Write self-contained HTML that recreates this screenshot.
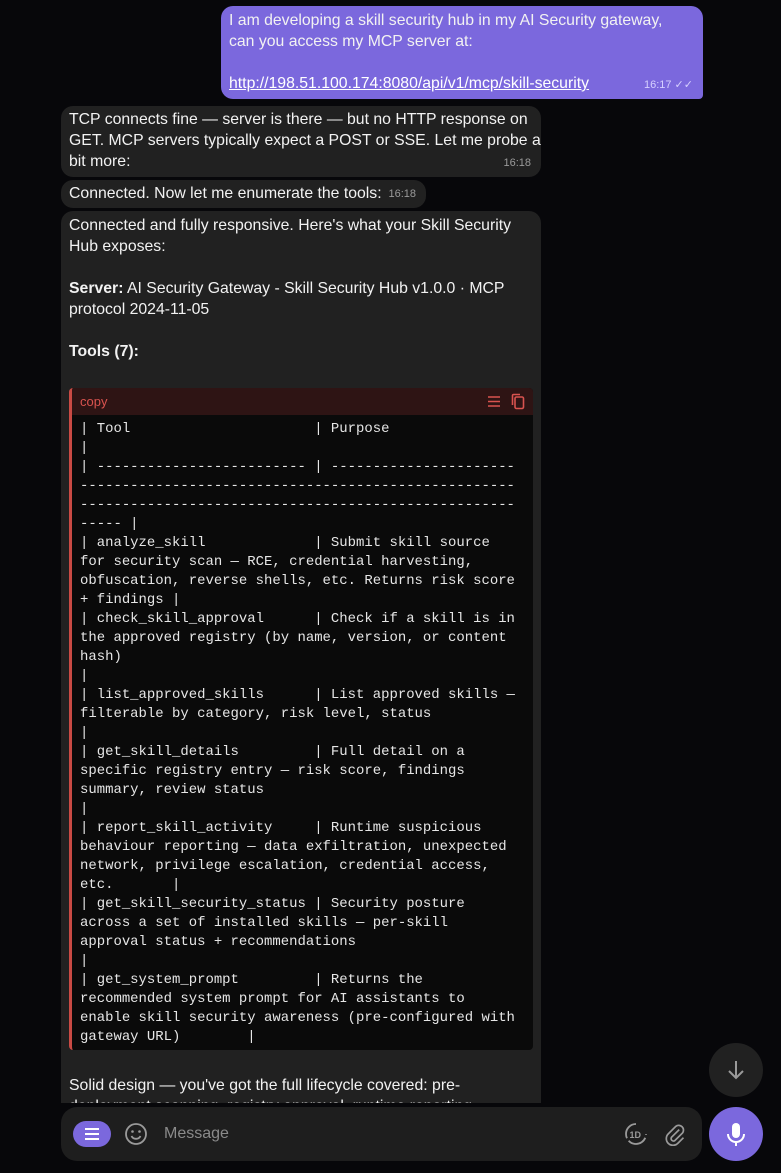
<!DOCTYPE html>
<html><head><meta charset="utf-8"><style>
*{box-sizing:border-box;margin:0;padding:0}
body{width:781px;height:1173px;background:#07070a;overflow:hidden;position:relative;font-family:"Liberation Sans",sans-serif;color:#f2f2f2;font-size:15.8px}
.b{position:absolute;border-radius:12px;padding:0 8px;line-height:21px;white-space:nowrap;overflow:hidden}
.u{left:221px;top:6px;width:482px;height:93px;background:#7b68dd;padding-top:4px;border-bottom-right-radius:4px}
.u a{color:#fff;text-decoration:underline}
.in{background:#212121;left:61px;width:480px}
.t{position:absolute;right:10px;bottom:3px;font-size:11px;color:#9a9a9a}
.u .t{color:#d6d0ff}
.code{position:absolute;left:69px;top:388px;width:464px;height:662px;background:#0a0a0a;border-left:3px solid #c94a44;border-radius:4px;overflow:hidden}
.ch{height:27px;background:#2e1414;color:#d9534f;font-size:13px;line-height:27px;padding-left:8px;position:relative}
pre{font-family:"Liberation Mono",monospace;font-size:13.95px;line-height:19px;color:#e6e6e6;padding:5px 0 0 8px;white-space:pre}
.bar{position:absolute;left:61px;top:1107px;width:641px;height:54px;background:#1e1e1e;border-radius:16px}
.fab{position:absolute;border-radius:50%}
</style></head><body>
<div class="b u">I am developing a skill security hub in my AI Security gateway,<br>can you access my MCP server at:<br><br><a>http://198.51.100.174:8080/api/v1/mcp/skill-security</a><span class="t">16:17 ✓✓</span></div>
<div class="b in" style="top:106px;height:71px;padding-top:3px">TCP connects fine — server is there — but no HTTP response on<br>GET. MCP servers typically expect a POST or SSE. Let me probe a<br>bit more:<span class="t">16:18</span></div>
<div class="b in" style="top:180px;height:28px;width:365px;padding-top:3px">Connected. Now let me enumerate the tools:<span class="t">16:18</span></div>
<div class="b in" style="top:211px;height:892px;padding-top:4px;border-bottom-left-radius:0;border-bottom-right-radius:0">Connected and fully responsive. Here's what your Skill Security<br>Hub exposes:<br><br><b>Server:</b> AI Security Gateway - Skill Security Hub v1.0.0 · MCP<br>protocol 2024-11-05<br><br><b>Tools (7):</b>
<div style="position:absolute;left:8px;top:864px">Solid design — you've got the full lifecycle covered: pre-<br>deployment scanning, registry approval, runtime reporting</div></div>
<div class="code"><div class="ch">copy
<svg style="position:absolute;right:32px;top:7px" width="14" height="13" viewBox="0 0 14 13"><path d="M1 2h12M1 6.5h12M1 11h12" stroke="#d9534f" stroke-width="1.6"/></svg>
<svg style="position:absolute;right:8px;top:5px" width="14" height="17" viewBox="0 0 14 17"><rect x="4" y="4" width="8.5" height="11.5" rx="1.5" fill="none" stroke="#d9534f" stroke-width="1.6"/><path d="M1.5 12V2.5a1 1 0 0 1 1-1H9" fill="none" stroke="#d9534f" stroke-width="1.6"/></svg></div>
<pre>| Tool                      | Purpose
|
| ------------------------- | ----------------------
----------------------------------------------------
----------------------------------------------------
----- |
| analyze_skill             | Submit skill source
for security scan — RCE, credential harvesting,
obfuscation, reverse shells, etc. Returns risk score
+ findings |
| check_skill_approval      | Check if a skill is in
the approved registry (by name, version, or content
hash)
|
| list_approved_skills      | List approved skills —
filterable by category, risk level, status
|
| get_skill_details         | Full detail on a
specific registry entry — risk score, findings
summary, review status
|
| report_skill_activity     | Runtime suspicious
behaviour reporting — data exfiltration, unexpected
network, privilege escalation, credential access,
etc.       |
| get_skill_security_status | Security posture
across a set of installed skills — per-skill
approval status + recommendations
|
| get_system_prompt         | Returns the
recommended system prompt for AI assistants to
enable skill security awareness (pre-configured with
gateway URL)        |</pre></div>
<div class="fab" style="left:709px;top:1043px;width:54px;height:54px;background:#212121"><svg width="54" height="54" viewBox="0 0 54 54"><path d="M27 18v17M20 28l7 7 7-7" fill="none" stroke="#9a9a9a" stroke-width="2"/></svg></div>
<div class="bar">
<div style="position:absolute;left:12px;top:14px;width:38px;height:26px;border-radius:13px;background:#7b68dd"><svg width="38" height="26" viewBox="0 0 38 26"><path d="M12 8h14M12 13h14M12 18h14" stroke="#fff" stroke-width="2"/></svg></div>
<svg style="position:absolute;left:63px;top:15px" width="24" height="24" viewBox="0 0 24 24"><circle cx="12" cy="12" r="10" fill="none" stroke="#9a9a9a" stroke-width="1.8"/><circle cx="8.5" cy="9.5" r="1.3" fill="#9a9a9a"/><circle cx="15.5" cy="9.5" r="1.3" fill="#9a9a9a"/><path d="M7.5 14a5 5 0 0 0 9 0" fill="none" stroke="#9a9a9a" stroke-width="1.8"/></svg>
<div style="position:absolute;left:103px;top:18px;color:#8a8a8a;font-size:16px">Message</div>
<svg style="position:absolute;left:563px;top:15px" width="24" height="24" viewBox="0 0 24 24"><path d="M12 2a10 10 0 1 0 10 10" fill="none" stroke="#9a9a9a" stroke-width="1.8" stroke-dasharray="20 3"/><text x="5.5" y="16" font-size="9" font-weight="bold" fill="#9a9a9a" font-family="Liberation Sans">1D</text></svg>
<svg style="position:absolute;left:603px;top:15px" width="22" height="24" viewBox="0 0 22 24"><path d="M16 8l-8 8a2.5 2.5 0 0 0 3.5 3.5l8-8a5 5 0 0 0-7-7l-8 8a7 7 0 0 0 10 10l6-6" fill="none" stroke="#9a9a9a" stroke-width="1.8" transform="scale(.95)"/></svg>
</div>
<div class="fab" style="left:709px;top:1107px;width:54px;height:54px;background:#7b68dd"><svg width="54" height="54" viewBox="0 0 54 54"><rect x="23" y="16" width="8" height="15" rx="4" fill="#fff"/><path d="M19 27a8 8 0 0 0 16 0M27 35v4" fill="none" stroke="#fff" stroke-width="2"/></svg></div>
</body></html>
